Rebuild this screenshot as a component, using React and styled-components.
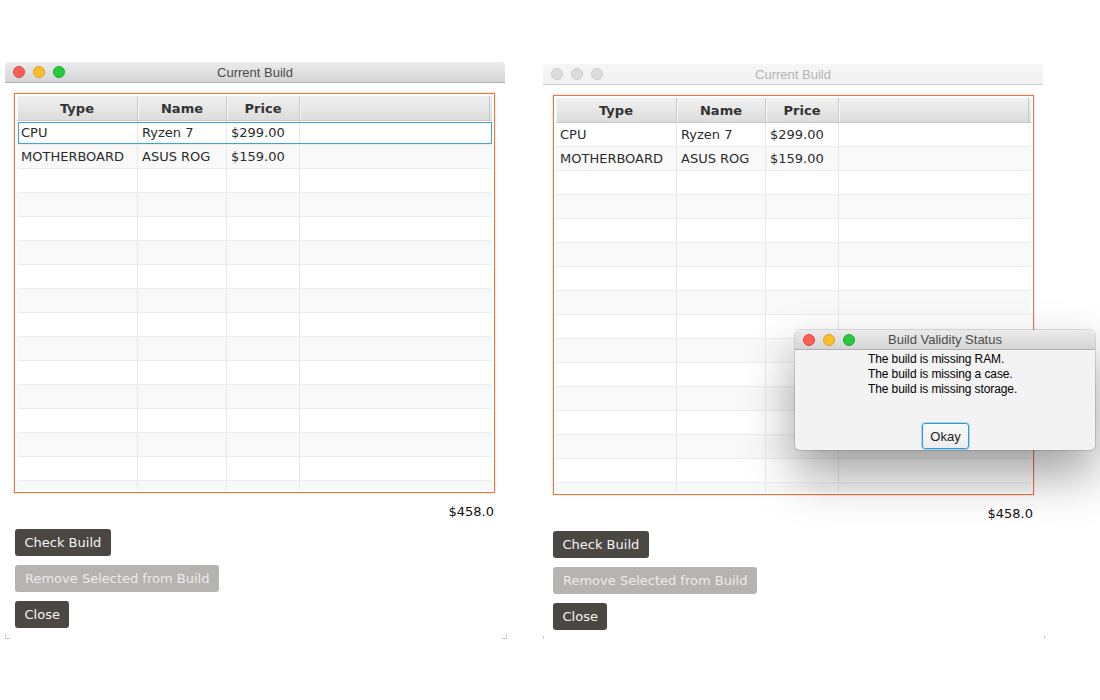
import React from "react";
import styled, { createGlobalStyle } from "styled-components";

const GlobalStyle = createGlobalStyle`
  body {
    margin: 0;
    background: #fff;
    font-family: "DejaVu Sans", Verdana, sans-serif;
  }
`;

const parts = [
  { type: "CPU", name: "Ryzen 7", price: "$299.00" },
  { type: "MOTHERBOARD", name: "ASUS ROG", price: "$159.00" }
];

const cols = [121, 89, 73];

export default function App() {
  return (
    <>
      <GlobalStyle />
      <Desktop>
        <BuildWindow active selected={0} />
        <BuildWindow shift>
          <Dialog>
            <TitleBar active small>
              <Lights>
                <Light color="#fc5f57" edge="#e0443e" />
                <Light color="#fdbc2e" edge="#dea123" />
                <Light color="#28c840" edge="#1aab29" />
              </Lights>
              <TitleText active>Build Validity Status</TitleText>
            </TitleBar>
            <Message>
              <div>The build is missing RAM.</div>
              <div>The build is missing a case.</div>
              <div>The build is missing storage.</div>
            </Message>
            <DialogFoot>
              <OkButton>Okay</OkButton>
            </DialogFoot>
          </Dialog>
        </BuildWindow>
      </Desktop>
    </>
  );
}

function BuildWindow({ active, selected, shift, children }) {
  const rows = [];
  for (let i = 0; i < 16; i++) rows.push(parts[i] || null);
  return (
    <Window shift={shift}>
      <TitleBar active={active}>
        <Lights>
          {active ? (
            <>
              <Light color="#fc5f57" edge="#e0443e" />
              <Light color="#fdbc2e" edge="#dea123" />
              <Light color="#28c840" edge="#1aab29" />
            </>
          ) : (
            <>
              <Light color="#dcdcdc" edge="#cfcfcf" />
              <Light color="#dcdcdc" edge="#cfcfcf" />
              <Light color="#dcdcdc" edge="#cfcfcf" />
            </>
          )}
        </Lights>
        <TitleText active={active}>Current Build</TitleText>
      </TitleBar>
      <Body shift={shift}>
        <TableBox>
          <HeadRow>
            <HeadCell w={cols[0]}>Type</HeadCell>
            <HeadCell w={cols[1]}>Name</HeadCell>
            <HeadCell w={cols[2]}>Price</HeadCell>
            <HeadCell grow />
          </HeadRow>
          <Rows>
            {rows.map((r, i) => (
              <Row key={i} odd={i % 2 === 1}>
                {selected === i && <Selection />}
                <Cell w={cols[0]}>{r && r.type}</Cell>
                <Cell w={cols[1]}>{r && r.name}</Cell>
                <Cell w={cols[2]}>{r && r.price}</Cell>
                <Cell grow />
              </Row>
            ))}
          </Rows>
        </TableBox>
        <Total>$458.0</Total>
        <Buttons shift={shift}>
          <Button>Check Build</Button>
          <Button disabled>Remove Selected from Build</Button>
          <Button>Close</Button>
        </Buttons>
      </Body>
      <Grip />
      {children}
    </Window>
  );
}

const Desktop = styled.div`
  display: flex;
  align-items: flex-start;
  gap: 38px;
  padding: 62px 0 0 5px;
`;

const Window = styled.div`
  position: relative;
  width: 500px;
  background: #fff;
  margin-top: ${(p) => (p.shift ? "2px" : "0")};
`;

const TitleBar = styled.div`
  position: relative;
  height: ${(p) => (p.small ? "19px" : "20px")};
  display: flex;
  align-items: center;
  justify-content: center;
  border-radius: 4px 4px 0 0;
  border-bottom: 1px solid ${(p) => (p.active ? "#b1b1b1" : "#d3d3d3")};
  background: ${(p) =>
    p.active
      ? "linear-gradient(#ebebeb, #d5d5d5)"
      : "linear-gradient(#f6f6f6, #f1f1f1)"};
`;

const Lights = styled.div`
  position: absolute;
  left: 8px;
  top: 0;
  bottom: 0;
  display: flex;
  align-items: center;
  gap: 8px;
`;

const Light = styled.span`
  width: 12px;
  height: 12px;
  border-radius: 50%;
  box-sizing: border-box;
  background: ${(p) => p.color};
  border: 0.5px solid ${(p) => p.edge};
`;

const TitleText = styled.div`
  font-family: "Liberation Sans", Arial, sans-serif;
  font-size: 13px;
  color: ${(p) => (p.active ? "#4c4c4c" : "#b4b4b4")};
`;

const Body = styled.div`
  padding: ${(p) => (p.shift ? "10px 9px 9px 10px" : "10px 10px 9px 9px")};
`;

const TableBox = styled.div`
  height: 400px;
  box-sizing: border-box;
  border: 1px solid #f07540;
  box-shadow: 0 0 0 1px rgba(240, 117, 64, 0.15);
  padding: 2px;
  display: flex;
  flex-direction: column;
  overflow: hidden;
`;

const HeadRow = styled.div`
  display: flex;
  height: 25px;
  flex-shrink: 0;
  box-sizing: border-box;
  border-bottom: 1px solid #c9c9c9;
  background: linear-gradient(#f1f1f1, #dcdcdc);
`;

const HeadCell = styled.div`
  ${(p) => (p.grow ? "flex: 1;" : `width: ${p.w}px;`)}
  box-sizing: border-box;
  border-right: 1px solid #c9c9c9;
  box-shadow: inset 1px 0 0 #f8f8f8;
  display: flex;
  align-items: center;
  justify-content: center;
  font-weight: bold;
  font-size: 13px;
  color: #333;
  &:last-child {
    margin-right: 2px;
  }
`;

const Rows = styled.div`
  flex: 1;
  overflow: hidden;
`;

const Row = styled.div`
  position: relative;
  display: flex;
  height: 24px;
  box-sizing: border-box;
  border-bottom: 1px solid #ececec;
  background: ${(p) => (p.odd ? "#f9f9f9" : "#fff")};
`;

const Selection = styled.div`
  position: absolute;
  top: 1px;
  left: 1px;
  right: 0;
  bottom: 0;
  border: 1px solid #3ba4d8;
  pointer-events: none;
`;

const Cell = styled.div`
  ${(p) => (p.grow ? "flex: 1;" : `width: ${p.w}px;`)}
  box-sizing: border-box;
  border-right: 1px solid #e8e8e8;
  padding-left: 4px;
  display: flex;
  align-items: center;
  font-size: 13px;
  color: #2b2b2b;
  white-space: nowrap;
  &:last-child {
    border-right: none;
  }
`;

const Total = styled.div`
  height: 36px;
  box-sizing: border-box;
  padding: 10px 1px 0 0;
  text-align: right;
  font-size: 13px;
  line-height: 18px;
  color: #111;
`;

const Buttons = styled.div`
  display: flex;
  flex-direction: column;
  align-items: flex-start;
  gap: 9px;
  padding-left: ${(p) => (p.shift ? "0" : "1px")};
`;

const Button = styled.button`
  height: 27px;
  padding: 0 ${(p) => (p.disabled ? "10px" : "9.5px")};
  border: none;
  border-radius: 3px;
  font-family: "DejaVu Sans", Verdana, sans-serif;
  font-size: 13px;
  background: ${(p) => (p.disabled ? "#b6b4b1" : "#4b4742")};
  color: ${(p) => (p.disabled ? "#ebebeb" : "#f4f4f4")};
`;

const Grip = styled.div`
  position: absolute;
  left: 0;
  bottom: -2px;
  width: 4px;
  height: 4px;
  border-left: 1px solid #c8c8c8;
  border-bottom: 1px solid #c8c8c8;
  &::after {
    content: "";
    position: absolute;
    left: 496px;
    bottom: -1px;
    width: 4px;
    height: 4px;
    border-right: 1px solid #c8c8c8;
    border-bottom: 1px solid #c8c8c8;
  }
`;

const Dialog = styled.div`
  position: absolute;
  left: 252px;
  top: 266px;
  width: 300px;
  height: 120px;
  display: flex;
  flex-direction: column;
  background: #f3f3f3;
  border-radius: 5px;
  box-shadow: 0 0 0 1px rgba(0, 0, 0, 0.12), 0 24px 50px rgba(0, 0, 0, 0.38);
`;

const Message = styled.div`
  flex: 1;
  padding: 2px 0 0 73px;
  font-family: "Liberation Sans", Arial, sans-serif;
  font-size: 12px;
  letter-spacing: -0.1px;
  line-height: 15px;
  color: #000;
`;

const DialogFoot = styled.div`
  display: flex;
  justify-content: center;
  padding: 0 0 1px 1px;
`;

const OkButton = styled.button`
  width: 47px;
  height: 26px;
  box-sizing: border-box;
  border: 1px solid #2f9ad8;
  box-shadow: 0 0 0 1px rgba(47, 154, 216, 0.35);
  border-radius: 3px;
  background: linear-gradient(#fbfbfb, #ececec);
  font-family: "Liberation Sans", Arial, sans-serif;
  font-size: 13px;
  color: #222;
  padding: 0;
`;
